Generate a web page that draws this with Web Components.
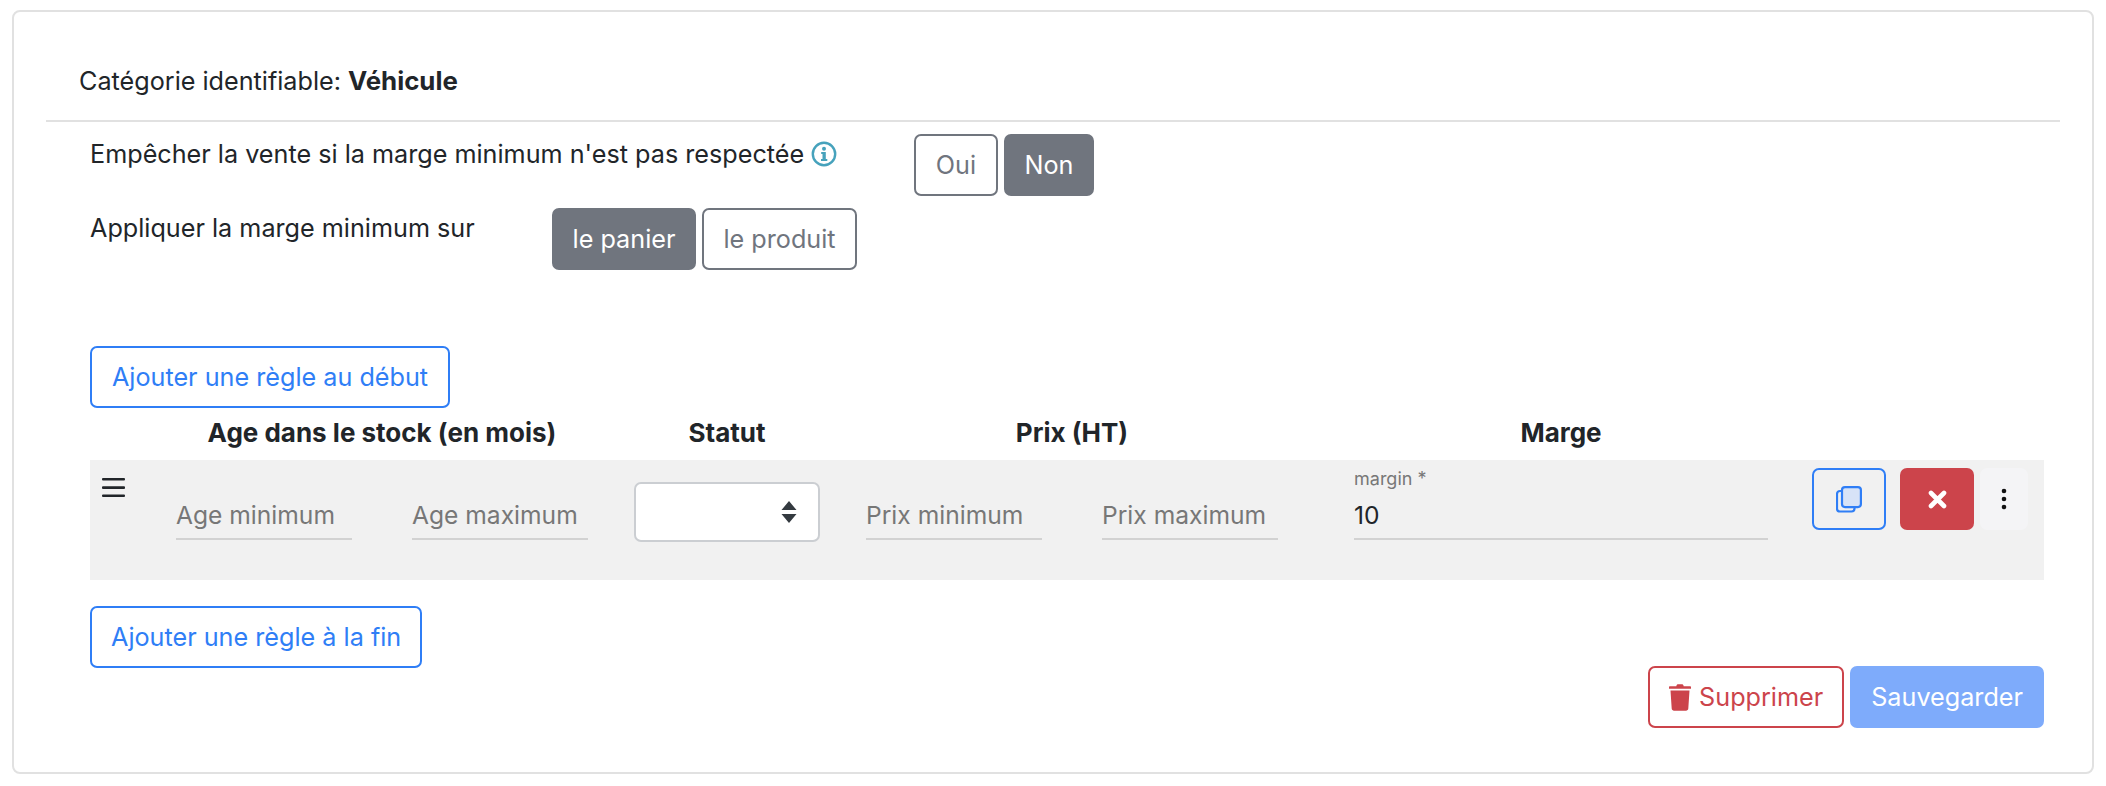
<!DOCTYPE html>
<html lang="fr">
<head>
<meta charset="utf-8">
<title>Marge minimum</title>
<style>
    html, body { margin: 0; padding: 0; background: #fff; }
    body {
        font-family: Inter, "Liberation Sans", sans-serif;
        font-size: 25.2px;
        color: #212529;
        --rule-cols: 86px 412px 46px 186px 46px 412px 76px 414px 44px 232px;
    }
    b { font-size: 25.8px; }
</style>
</head>
<body>
<margin-card>
    <span slot="title">Catégorie identifiable: <b>Véhicule</b></span>

    <option-line label-width="824">
        <span slot="label">Empêcher la vente si la marge minimum n'est pas respectée <info-icon></info-icon></span>
        <ui-btn variant="gray-outline" style="width:84px">Oui</ui-btn>
        <ui-btn variant="gray" style="width:90px">Non</ui-btn>
    </option-line>
    <option-line label-width="462">
        <span slot="label">Appliquer la marge minimum sur</span>
        <ui-btn variant="gray" style="width:144px">le panier</ui-btn>
        <ui-btn variant="gray-outline" style="width:155px">le produit</ui-btn>
    </option-line>

    <ui-btn variant="blue-outline" style="margin-top:76px;width:360px">Ajouter une règle au début</ui-btn>
    <rule-header></rule-header>
    <rule-row></rule-row>
    <ui-btn variant="blue-outline" style="margin-top:26px">Ajouter une règle à la fin</ui-btn>

    <footer-bar>
        <ui-btn variant="red-outline"><svg slot="icon" width="22" height="27" viewBox="0 0 22 27"><path fill="#cc444b" d="M7.5 1.6c.2-.9.9-1.4 1.8-1.4h3.4c.9 0 1.6.5 1.8 1.4l.2.7H21c.6 0 1 .4 1 1v1.5H0V3.300c0-.6.4-1 1-1h6.300zM1.500 6.500h19l-1.200 18.100c-.1 1.300-1.100 2.200-2.300 2.200H5c-1.200 0-2.200-.9-2.300-2.200z"/></svg>Supprimer</ui-btn>
        <ui-btn variant="blue-soft">Sauvegarder</ui-btn>
    </footer-bar>
</margin-card>

<script>
const cardTemplate = document.createElement('template');
cardTemplate.innerHTML = `
<style>
    :host {
        display: block;
        box-sizing: border-box;
        width: 2082px;
        height: 764px;
        margin: 10px 0 0 12px;
        border: 2px solid #e1e1e1;
        border-radius: 8px;
        background: #fff;
    }
    .title {
        margin: 0 32px;
        padding: 53px 33px 23px;
        line-height: 32px;
        border-bottom: 2px solid #e1e1e1;
    }
    .body {
        display: flex;
        flex-direction: column;
        align-items: flex-start;
        padding: 0 48px 0 76px;
    }
</style>
<div class="title"><slot name="title"></slot></div>
<div class="body"><slot></slot></div>
`;

class MarginCard extends HTMLElement {
    connectedCallback() {
        this.attachShadow({ mode: 'open' });
        this.shadowRoot.appendChild(cardTemplate.content.cloneNode(true));
    }
}

const btnTemplate = document.createElement('template');
btnTemplate.innerHTML = `
<style>
    :host {
        display: inline-flex;
        align-items: center;
        justify-content: center;
        gap: 8px;
        box-sizing: border-box;
        height: 62px;
        padding: 0 19px;
        border: 2px solid transparent;
        border-radius: 7px;
        font-size: 25.2px;
        white-space: nowrap;
    }
    :host([variant="gray"]) { background: #70757e; border-color: #70757e; color: #fff; }
    :host([variant="gray-outline"]) { background: #fff; border-color: #70757e; color: #70757e; }
    :host([variant="blue-outline"]) { background: #fff; border-color: #2f7ef6; color: #2f7ef6; }
    :host([variant="red-outline"]) { background: #fff; border-color: #cc444b; color: #cc444b; }
    :host([variant="blue-soft"]) { background: #7eabfb; border-color: #7eabfb; color: #fff; }
</style>
<slot name="icon"></slot><slot></slot>
`;

class UiBtn extends HTMLElement {
    connectedCallback() {
        this.attachShadow({ mode: 'open' });
        this.shadowRoot.appendChild(btnTemplate.content.cloneNode(true));
    }
}

const lineTemplate = document.createElement('template');
lineTemplate.innerHTML = `
<style>
    :host { display: flex; align-items: flex-start; margin-top: 12px; }
    .label { box-sizing: border-box; flex: none; padding-top: 4px; line-height: 32px; }
    .btns { display: flex; gap: 6px; }
</style>
<div class="label"><slot name="label"></slot></div>
<div class="btns"><slot></slot></div>
`;

class OptionLine extends HTMLElement {
    connectedCallback() {
        this.attachShadow({ mode: 'open' });
        this.shadowRoot.appendChild(lineTemplate.content.cloneNode(true));
        this.shadowRoot.querySelector('.label').style.width = this.getAttribute('label-width') + 'px';
    }
}

class InfoIcon extends HTMLElement {
    connectedCallback() {
        this.attachShadow({ mode: 'open' });
        this.shadowRoot.innerHTML = `
        <style>
            :host { display: inline-block; width: 26px; height: 26px; vertical-align: -4px; }
            svg { display: block; }
        </style>
        <svg width="26" height="26" viewBox="0 0 26 26">
            <circle cx="13" cy="13" r="11.2" fill="none" stroke="#46a2bc" stroke-width="2.4"/>
            <circle cx="13" cy="7.800" r="2" fill="#46a2bc"/>
            <path fill="#46a2bc" d="M10.200 11h4.600v7h1.500v2h-6.300v-2h1.500v-5h-1.300z"/>
        </svg>`;
    }
}

const headerTemplate = document.createElement('template');
headerTemplate.innerHTML = `
<style>
    :host {
        display: grid;
        grid-template-columns: var(--rule-cols);
        box-sizing: border-box;
        width: 100%;
        height: 52px;
        padding-bottom: 2px;
        align-items: center;
        text-align: center;
        font-size: 26px;
        font-weight: 700;
        line-height: 32px;
    }
    .age { grid-column: 2; }
    .statut { grid-column: 4; }
    .prix { grid-column: 6; }
    .marge { grid-column: 8; }
</style>
<div class="age">Age dans le stock (en mois)</div>
<div class="statut">Statut</div>
<div class="prix">Prix (HT)</div>
<div class="marge">Marge</div>
`;

class RuleHeader extends HTMLElement {
    connectedCallback() {
        this.attachShadow({ mode: 'open' });
        this.shadowRoot.appendChild(headerTemplate.content.cloneNode(true));
    }
}

const fieldTemplate = document.createElement('template');
fieldTemplate.innerHTML = `
<style>
    :host { display: block; box-sizing: border-box; width: 176px; padding-top: 8px; }
    :host([wide]) { width: 100%; }
    .label { height: 22px; font-size: 18px; line-height: 22px; color: #777; }
    .value {
        box-sizing: border-box;
        height: 50px;
        padding-top: 9px;
        font-size: 24.6px;
        line-height: 32px;
        border-bottom: 2px solid #d2d2d2;
        color: #777;
    }
    :host([filled]) .value { color: #212529; }
</style>
<div class="label"></div>
<div class="value"></div>
`;

class RuleField extends HTMLElement {
    connectedCallback() {
        this.attachShadow({ mode: 'open' });
        this.shadowRoot.appendChild(fieldTemplate.content.cloneNode(true));
        this.shadowRoot.querySelector('.label').textContent = this.getAttribute('label') || '';
        this.shadowRoot.querySelector('.value').textContent = this.getAttribute('text') || '';
    }
}

const rowTemplate = document.createElement('template');
rowTemplate.innerHTML = `
<style>
    :host {
        display: grid;
        grid-template-columns: var(--rule-cols);
        width: 100%;
        height: 120px;
        align-items: start;
        background: #f1f1f1;
    }
    .handle { padding: 18px 0 0 12px; }
    .pair { display: flex; justify-content: space-between; }
    .select {
        box-sizing: border-box;
        display: flex;
        align-items: center;
        justify-content: flex-end;
        height: 60px;
        margin-top: 22px;
        padding-right: 21px;
        background: #fff;
        border: 2px solid #cbced2;
        border-radius: 7px;
    }
    .actions { display: flex; padding-top: 8px; }
    .square {
        box-sizing: border-box;
        display: flex;
        align-items: center;
        justify-content: center;
        height: 62px;
        border-radius: 7px;
    }
    .copy { width: 74px; border: 2px solid #2f7ef6; }
    .del { width: 74px; margin-left: 14px; background: #cc444b; }
    .more { width: 48px; margin-left: 6px; background: #f4f4f6; }
    svg { display: block; }
</style>
<div class="handle">
    <svg width="24" height="21" viewBox="0 0 24 21" fill="#212529">
        <rect x="0" y="0" width="23" height="2.600" rx="1"/>
        <rect x="0" y="8.300" width="23" height="2.600" rx="1"/>
        <rect x="0" y="16.500" width="23" height="2.600" rx="1"/>
    </svg>
</div>
<div class="pair">
    <rule-field text="Age minimum"></rule-field>
    <rule-field text="Age maximum"></rule-field>
</div>
<div></div>
<div class="select">
    <svg width="16" height="22" viewBox="0 0 16 22" fill="#343a40">
        <path d="M8 0l7.500 9H.5zM8 22L.5 13h15z"/>
    </svg>
</div>
<div></div>
<div class="pair">
    <rule-field text="Prix minimum"></rule-field>
    <rule-field text="Prix maximum"></rule-field>
</div>
<div></div>
<rule-field wide filled label="margin *" text="10"></rule-field>
<div></div>
<div class="actions">
    <div class="square copy">
        <svg width="26" height="27" viewBox="0 0 26 27" fill="none" stroke="#2f7ef6" stroke-width="2.200">
            <path d="M5.500 5H4a3 3 0 0 0-3 3v14.500a3 3 0 0 0 3 3h11.500a3 3 0 0 0 3-3V22"/>
            <rect x="6" y="1.100" width="18.900" height="20" rx="3" fill="#d7e3f7"/>
        </svg>
    </div>
    <div class="square del">
        <svg width="19" height="19" viewBox="0 0 19 19" stroke="#fff" stroke-width="4.600" stroke-linecap="round">
            <path d="M3 3l13 13M16 3L3 16"/>
        </svg>
    </div>
    <div class="square more">
        <svg width="6" height="22" viewBox="0 0 6 22" fill="#111">
            <circle cx="3" cy="3" r="2.300"/>
            <circle cx="3" cy="11" r="2.300"/>
            <circle cx="3" cy="19" r="2.300"/>
        </svg>
    </div>
</div>
`;

class RuleRow extends HTMLElement {
    connectedCallback() {
        this.attachShadow({ mode: 'open' });
        this.shadowRoot.appendChild(rowTemplate.content.cloneNode(true));
    }
}

class FooterBar extends HTMLElement {
    connectedCallback() {
        this.attachShadow({ mode: 'open' });
        this.shadowRoot.innerHTML = `
        <style>
            :host { display: flex; justify-content: flex-end; gap: 6px; width: 100%; margin-top: -2px; }
        </style>
        <slot></slot>`;
    }
}

customElements.define('margin-card', MarginCard);
customElements.define('ui-btn', UiBtn);
customElements.define('option-line', OptionLine);
customElements.define('info-icon', InfoIcon);
customElements.define('rule-header', RuleHeader);
customElements.define('rule-field', RuleField);
customElements.define('rule-row', RuleRow);
customElements.define('footer-bar', FooterBar);
</script>
</body>
</html>
